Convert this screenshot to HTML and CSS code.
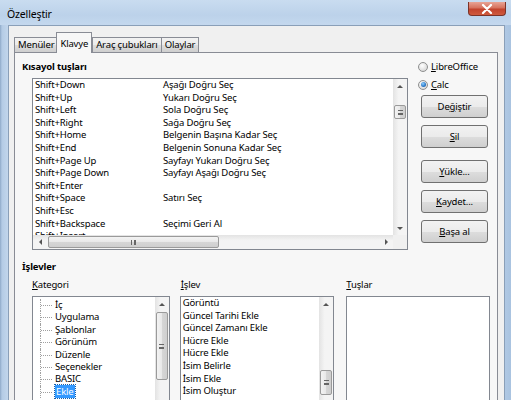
FILE: index.html
```html
<!DOCTYPE html>
<html lang="tr">
<head>
    <meta charset="UTF-8">
    <meta name="viewport" content="width=device-width, initial-scale=1.0">
    <title>Özelleştir</title>
    <link rel="stylesheet" href="styles.css">
</head>
<body>
<div class="window">

    <!-- Title bar -->
    <div class="titlebar">
        <span class="title">Özelleştir</span>
        <span class="close-btn">
            <svg width="12" height="10" viewBox="0 0 12 10">
                <path d="M2 1 L10 9 M10 1 L2 9" stroke="#fff" stroke-width="2.2" stroke-linecap="round"/>
            </svg>
        </span>
    </div>

    <div class="client">
        <!-- Tabs -->
        <div class="tabs">
            <div class="tab">Menüler</div>
            <div class="tab active">Klavye</div>
            <div class="tab">Araç çubukları</div>
            <div class="tab">Olaylar</div>
        </div>

        <div class="tab-page">
            <!-- Shortcut keys -->
            <div class="shortcut-section">
                <div class="shortcut-left">
                    <div class="section-title">Kısayol tuşları</div>
                    <div class="listbox shortcut-list">
                        <div class="list-content">
                            <div class="row"><span class="key">Shift+Down</span><span>Aşağı Doğru Seç</span></div>
                            <div class="row"><span class="key">Shift+Up</span><span>Yukarı Doğru Seç</span></div>
                            <div class="row"><span class="key">Shift+Left</span><span>Sola Doğru Seç</span></div>
                            <div class="row"><span class="key">Shift+Right</span><span>Sağa Doğru Seç</span></div>
                            <div class="row"><span class="key">Shift+Home</span><span>Belgenin Başına Kadar Seç</span></div>
                            <div class="row"><span class="key">Shift+End</span><span>Belgenin Sonuna Kadar Seç</span></div>
                            <div class="row"><span class="key">Shift+Page Up</span><span>Sayfayı Yukarı Doğru Seç</span></div>
                            <div class="row"><span class="key">Shift+Page Down</span><span>Sayfayı Aşağı Doğru Seç</span></div>
                            <div class="row"><span class="key">Shift+Enter</span><span></span></div>
                            <div class="row"><span class="key">Shift+Space</span><span>Satırı Seç</span></div>
                            <div class="row"><span class="key">Shift+Esc</span><span></span></div>
                            <div class="row"><span class="key">Shift+Backspace</span><span>Seçimi Geri Al</span></div>
                            <div class="row"><span class="key">Shift+Insert</span><span></span></div>
                        </div>
                        <div class="vscroll">
                            <div class="arrow"><i class="tri-up"></i></div>
                            <div class="track">
                                <div class="thumb v-thumb shortcut-thumb"><i class="grip-h"></i></div>
                            </div>
                            <div class="arrow"><i class="tri-down"></i></div>
                        </div>
                        <div class="hscroll">
                            <div class="arrow"><i class="tri-left"></i></div>
                            <div class="track">
                                <div class="thumb h-thumb"><i class="grip-v"></i></div>
                            </div>
                            <div class="arrow"><i class="tri-right"></i></div>
                        </div>
                        <div class="corner"></div>
                    </div>
                </div>

                <div class="shortcut-right">
                    <div class="radio"><span class="radio-dot"></span><span><u>L</u>ibreOffice</span></div>
                    <div class="radio checked"><span class="radio-dot"></span><span><u>C</u>alc</span></div>
                    <div class="button first">De<u>ğ</u>iştir</div>
                    <div class="button"><u>S</u>il</div>
                    <div class="button spaced"><u>Y</u>ükle...</div>
                    <div class="button"><u>K</u>aydet...</div>
                    <div class="button"><u>B</u>aşa al</div>
                </div>
            </div>

            <!-- Functions -->
            <div class="section-title functions-title">İşlevler</div>
            <div class="function-section">
                <div class="col category-col">
                    <div class="col-label"><u>K</u>ategori</div>
                    <div class="listbox small-list">
                        <div class="list-content tree">
                            <div class="tree-item">İç</div>
                            <div class="tree-item">Uygulama</div>
                            <div class="tree-item">Şablonlar</div>
                            <div class="tree-item">Görünüm</div>
                            <div class="tree-item">Düzenle</div>
                            <div class="tree-item">Seçenekler</div>
                            <div class="tree-item">BASIC</div>
                            <div class="tree-item"><span class="selected">Ekle</span></div>
                        </div>
                        <div class="vscroll">
                            <div class="arrow"><i class="tri-up"></i></div>
                            <div class="track">
                                <div class="thumb v-thumb category-thumb"><i class="grip-h"></i></div>
                            </div>
                        </div>
                    </div>
                </div>

                <div class="col function-col">
                    <div class="col-label"><u>İ</u>şlev</div>
                    <div class="listbox small-list">
                        <div class="list-content plain">
                            <div class="item">Görüntü</div>
                            <div class="item">Güncel Tarihi Ekle</div>
                            <div class="item">Güncel Zamanı Ekle</div>
                            <div class="item">Hücre Ekle</div>
                            <div class="item">Hücre Ekle</div>
                            <div class="item">İsim Belirle</div>
                            <div class="item">İsim Ekle</div>
                            <div class="item">İsim Oluştur</div>
                        </div>
                        <div class="vscroll">
                            <div class="arrow"><i class="tri-up"></i></div>
                            <div class="track">
                                <div class="thumb v-thumb function-thumb"><i class="grip-h"></i></div>
                            </div>
                        </div>
                    </div>
                </div>

                <div class="col keys-col">
                    <div class="col-label"><u>T</u>uşlar</div>
                    <div class="listbox small-list keys-list"></div>
                </div>
            </div>
        </div>
    </div>
</div>
</body>
</html>
```

FILE: styles.css
```css
/* Window frame */
body {
    margin: 0;
    padding: 0;
    font-family: 'Noto Sans', 'DejaVu Sans', sans-serif;
    font-size: 9.5px;
    letter-spacing: -0.15px;
    color: #000;
    background-color: #b7cfe9;
}

.window {
    width: 511px;
    height: 400px;
    overflow: hidden;
    background: linear-gradient(to right, #8ea9c8 0, #b4cbe5 2px, #c2d6ec 8px, #c4d8ee 95%, #a9c3e0 100%);
}

/* Title bar */
.titlebar {
    height: 25px;
    display: flex;
    justify-content: space-between;
    align-items: flex-start;
    padding-left: 7px;
    background: linear-gradient(to bottom, #c9dcf0, #bcd2ea 60%, #c4d8ee);
}

.title {
    margin-top: 8px;
    font-size: 10.5px;
    line-height: 13px;
}

.close-btn {
    width: 38px;
    height: 14px;
    margin-top: 2px;
    margin-right: 5px;
    box-sizing: border-box;
    border: 1px solid #7b3328;
    border-top: none;
    border-radius: 0 0 4px 4px;
    background: linear-gradient(to bottom, #e8a495, #d6725e 45%, #c2432d 55%, #cf5a3d);
    display: flex;
    align-items: center;
    justify-content: center;
}

/* Client area */
.client {
    margin-left: 8px;
    width: 497px;
    height: 375px;
    box-sizing: border-box;
    border-top: 1px solid #8a9fb8;
    border-left: 1px solid #8a9fb8;
    border-right: 1px solid #8a9fb8;
    background-color: #f0f0f0;
    padding: 6px 6px 0 5px;
}

/* Tabs */
.tabs {
    display: flex;
    align-items: flex-end;
    height: 20px;
}

.tab {
    height: 15px;
    line-height: 14px;
    padding: 0 3px;
    border: 1px solid #898c95;
    border-bottom: none;
    margin-right: -1px;
    background: linear-gradient(to bottom, #f2f2f2, #ebebeb 50%, #dddddd 51%, #cfcfcf);
    box-sizing: border-box;
}

.tab.active {
    height: 21px;
    line-height: 22px;
    padding: 0 3px;
    margin: 0 0 -1px -1px;
    background: #f7f7f7;
    position: relative;
    z-index: 1;
}

.tab-page {
    height: 360px;
    box-sizing: border-box;
    border: 1px solid #898c95;
    border-bottom: none;
    background-color: #f7f7f7;
    padding: 7px 7px 0 7px;
    width: 484px;
}

.section-title {
    font-weight: bold;
    line-height: 13px;
    height: 13px;
}

/* Shortcut section */
.shortcut-section {
    display: flex;
}

.shortcut-left {
    width: 386px;
}

.listbox {
    border: 1px solid #828790;
    background-color: #fff;
    box-sizing: border-box;
}

.shortcut-list {
    margin: 5px 0 0 10px;
    width: 376px;
    height: 172px;
    display: grid;
    grid-template-columns: 1fr 14px;
    grid-template-rows: 1fr 14px;
}

.list-content {
    overflow: hidden;
}

.row {
    display: flex;
    height: 12.6px;
    line-height: 12.6px;
    padding-left: 2px;
    white-space: nowrap;
}

.key {
    width: 128px;
    flex-shrink: 0;
}

/* Scrollbars */
.vscroll {
    display: flex;
    flex-direction: column;
    background: linear-gradient(to right, #e3e3e3, #f4f4f4 40%, #f4f4f4);
}

.hscroll {
    display: flex;
    background: linear-gradient(to bottom, #e3e3e3, #f4f4f4 40%, #f4f4f4);
}

.corner {
    background-color: #f0f0f0;
}

.vscroll .arrow {
    height: 14px;
    display: flex;
    align-items: center;
    justify-content: center;
    flex-shrink: 0;
}

.hscroll .arrow {
    width: 14px;
    display: flex;
    align-items: center;
    justify-content: center;
    flex-shrink: 0;
}

.track {
    flex: 1;
    display: flex;
    flex-direction: column;
}

.hscroll .track {
    flex-direction: row;
}

.thumb {
    box-sizing: border-box;
    border: 1px solid #9a9a9a;
    border-radius: 2px;
    display: flex;
    align-items: center;
    justify-content: center;
}

.v-thumb {
    margin: 0 1px;
    background: linear-gradient(to right, #f3f3f3, #e8e8e8 50%, #d6d6d6 51%, #cfcfcf);
}

.h-thumb {
    margin: 1px 0 1px 1px;
    width: 171px;
    background: linear-gradient(to bottom, #f3f3f3, #e8e8e8 50%, #d6d6d6 51%, #cfcfcf);
}

.shortcut-thumb {
    margin-top: 12px;
    height: 14px;
}

.category-thumb {
    margin-top: 1px;
    height: 68px;
}

.function-thumb {
    margin-top: 59px;
    height: 25px;
}

.grip-h {
    width: 5px;
    height: 5px;
    border-top: 1px solid #666;
    border-bottom: 1px solid #666;
    background: linear-gradient(to bottom, transparent 2px, #666 2px, #666 3px, transparent 3px);
    box-sizing: border-box;
}

.grip-v {
    width: 5px;
    height: 5px;
    border-left: 1px solid #666;
    border-right: 1px solid #666;
    background: linear-gradient(to right, transparent 2px, #666 2px, #666 3px, transparent 3px);
    box-sizing: border-box;
}

.tri-up, .tri-down, .tri-left, .tri-right {
    width: 0;
    height: 0;
    border: 3px solid transparent;
}

.tri-up {
    border-bottom: 3px solid #555;
    border-top: none;
}

.tri-down {
    border-top: 3px solid #555;
    border-bottom: none;
}

.tri-left {
    border-right: 3px solid #555;
    border-left: none;
}

.tri-right {
    border-left: 3px solid #555;
    border-right: none;
}

/* Right column: radios and buttons */
.shortcut-right {
    margin-left: 10px;
    width: 72px;
}

.radio {
    display: flex;
    align-items: center;
    height: 13px;
    line-height: 13px;
    margin-bottom: 5px;
}

.radio-dot {
    width: 10px;
    height: 10px;
    box-sizing: border-box;
    border: 1px solid #8e8f8f;
    border-radius: 50%;
    background: radial-gradient(circle at 40% 35%, #ffffff, #dcdcdc 70%, #c8c8c8);
    margin-right: 3px;
    display: flex;
    align-items: center;
    justify-content: center;
}

.radio.checked .radio-dot::after {
    content: "";
    width: 5px;
    height: 5px;
    border-radius: 50%;
    background: radial-gradient(circle at 40% 35%, #8fd0ff, #2a78c8 60%, #1a4c86);
}

.button {
    width: 67px;
    height: 23px;
    line-height: 21px;
    margin-left: 3px;
    margin-bottom: 7px;
    box-sizing: border-box;
    text-align: center;
    border: 1px solid #707070;
    border-radius: 3px;
    background: linear-gradient(to bottom, #f2f2f2, #ebebeb 50%, #dddddd 51%, #cfcfcf);
}

.button.first {
    margin-top: -1px;
}

.button.spaced {
    margin-top: 12px;
}

/* Functions section */
.functions-title {
    margin-top: 10px;
}

.function-section {
    display: flex;
    margin-top: 5px;
}

.col-label {
    line-height: 13px;
    height: 13px;
    margin-bottom: 5px;
}

.category-col {
    margin-left: 10px;
    width: 138px;
}

.function-col {
    margin-left: 10px;
    width: 155px;
}

.function-col .col-label {
    padding-left: 1px;
}

.keys-col {
    margin-left: 12px;
    width: 144px;
}

.small-list {
    height: 120px;
    display: grid;
    grid-template-columns: 1fr 14px;
}

.keys-list {
    display: block;
}

/* Category tree */
.tree {
    padding-top: 2px;
    padding-left: 7px;
}

.tree-item {
    position: relative;
    height: 12.4px;
    line-height: 12.4px;
    padding-left: 14px;
    border-left: 1px dotted #a0a0a0;
    white-space: nowrap;
}

.tree-item::before {
    content: "";
    position: absolute;
    left: 0;
    top: 6px;
    width: 11px;
    border-top: 1px dotted #a0a0a0;
}

.selected {
    background-color: #3399ff;
    color: #fff;
    outline: 1px dotted #1a5fa8;
    padding: 0 1px;
}

.plain {
    padding-left: 2px;
}

.item {
    height: 12.6px;
    line-height: 12.6px;
    white-space: nowrap;
}
```
